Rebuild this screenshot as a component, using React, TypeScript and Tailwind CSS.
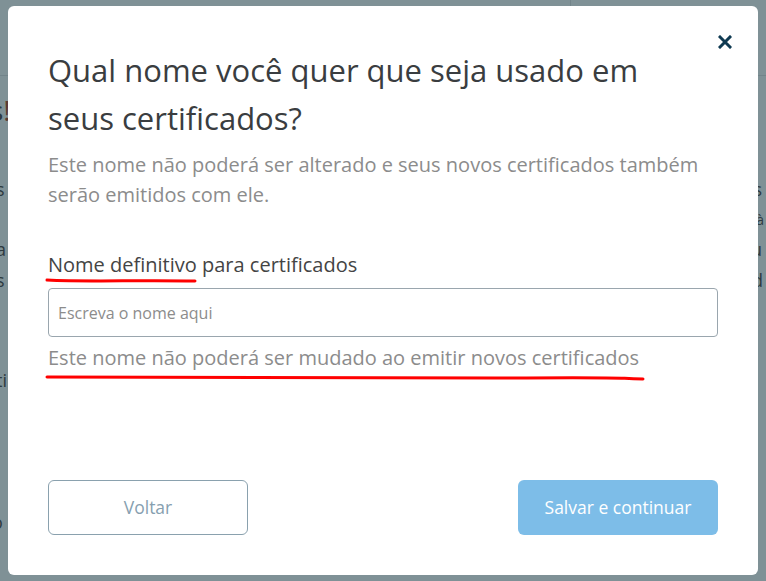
import React from "react";

const font = { fontFamily: '"Open Sans", "Noto Sans", sans-serif' };

function RedLine({ width, d, top = 0 }: { width: number; d: string; top?: number }) {
  return (
    <svg
      className="absolute left-[-3px] top-full"
      style={{ marginTop: top }}
      width={width}
      height={8}
      viewBox={`0 0 ${width} 8`}
      fill="none"
    >
      <path d={d} stroke="#ff0000" strokeWidth={3} strokeLinecap="round" />
    </svg>
  );
}

export default function App() {
  return (
    <div className="relative w-[766px] h-[581px] overflow-hidden bg-[#7f9196]" style={font}>
      {/* background page fragments */}
      <div className="flex flex-col h-full text-[#2e3a40]">
        <div className="h-[76px] border-b border-[#72848a] flex">
          <div className="ml-[570px] border-l border-[#72848a]" />
        </div>
        <div className="flex flex-col mt-[14px]">
          <div className="flex justify-between h-[40px] items-center text-[28px] leading-none">
            <span className="ml-[-10px]">s<span className="text-[#5a3a30]">!</span></span>
            <span />
          </div>
          <div className="flex justify-between h-[30px] items-center text-[18px] ml-[-4px] mt-[44px]">
            <span>s</span>
            <span className="mr-[4px]">s</span>
          </div>
          <div className="flex justify-between h-[30px] items-center text-[18px]">
            <span className="ml-[12px] text-[#a07a2a] text-[10px]">•</span>
            <span className="mr-[2px] text-[14px]">à</span>
          </div>
          <div className="flex justify-between h-[30px] items-center text-[18px] ml-[-4px]">
            <span>a</span>
            <span className="mr-[4px]">u</span>
          </div>
          <div className="flex justify-between h-[32px] items-center text-[18px] ml-[-4px]">
            <span>s</span>
            <span className="mr-[3px]">d</span>
          </div>
          <div className="flex h-[30px] items-center text-[18px] ml-[-4px] mt-[69px]"><span>ti</span></div>
          <div className="flex h-[30px] items-center text-[18px] ml-[-4px] mt-[10px]"><span>.</span></div>
          <div className="flex h-[30px] items-center text-[18px] ml-[-8px] mt-[25px]"><span>r</span></div>
          <div className="flex h-[30px] items-center text-[18px] ml-[-8px] mt-[17px]"><span>o</span></div>
        </div>
      </div>

      {/* modal */}
      <div className="absolute inset-0 flex items-center justify-center">
        <div className="relative w-[750px] h-[569px] bg-white rounded-[6px] px-[40px] pt-[40px] pb-[40px] flex flex-col">
          <button className="absolute right-[26px] top-[29px]">
            <svg width="14" height="14" viewBox="0 0 14 14">
              <path d="M2 2 L12 12 M12 2 L2 12" stroke="#0f3a52" strokeWidth={3} strokeLinecap="square" />
            </svg>
          </button>
          <h1 className="text-[31px] leading-[48px] text-[#3a3d40] font-normal">
            Qual nome você quer que seja usado em
            <br />
            seus certificados?
          </h1>
          <p className="mt-[8px] text-[20px] leading-[30px] text-[#8c8c8c]">
            Este nome não poderá ser alterado e seus novos certificados também
            <br />
            serão emitidos com ele.
          </p>
          <label className="mt-[42px] text-[20px] leading-[26px] text-[#444]">
            <span className="relative">
              Nome definitivo
              <RedLine width={156} top={-1} d="M2 3 C 40 5, 90 3, 150 4" />
            </span>{" "}
            para certificados
          </label>
          <input
            className="mt-[10px] h-[49px] w-full rounded-[4px] border border-[#9aa6ae] px-[9px] text-[16px] text-[#333] placeholder:text-[#8c8c8c] outline-none"
            placeholder="Escreva o nome aqui"
            style={font}
          />
          <p className="mt-[6px] text-[20px] leading-[30px] text-[#8c8c8c]">
            <span className="relative">
              Este nome não poderá ser mudado ao emitir novos certificados
              <RedLine width={602} top={4} d="M2 2 C 150 3, 300 4, 450 3 S 560 3, 598 4" />
            </span>
          </p>
          <div className="mt-auto flex justify-between">
            <button className="w-[200px] h-[55px] rounded-[6px] border border-[#8aa1ae] text-[17.5px] text-[#86a0b0]">
              Voltar
            </button>
            <button className="w-[200px] h-[55px] rounded-[6px] bg-[#7dbde8] text-[17.5px] text-white">
              Salvar e continuar
            </button>
          </div>
        </div>
      </div>
    </div>
  );
}
